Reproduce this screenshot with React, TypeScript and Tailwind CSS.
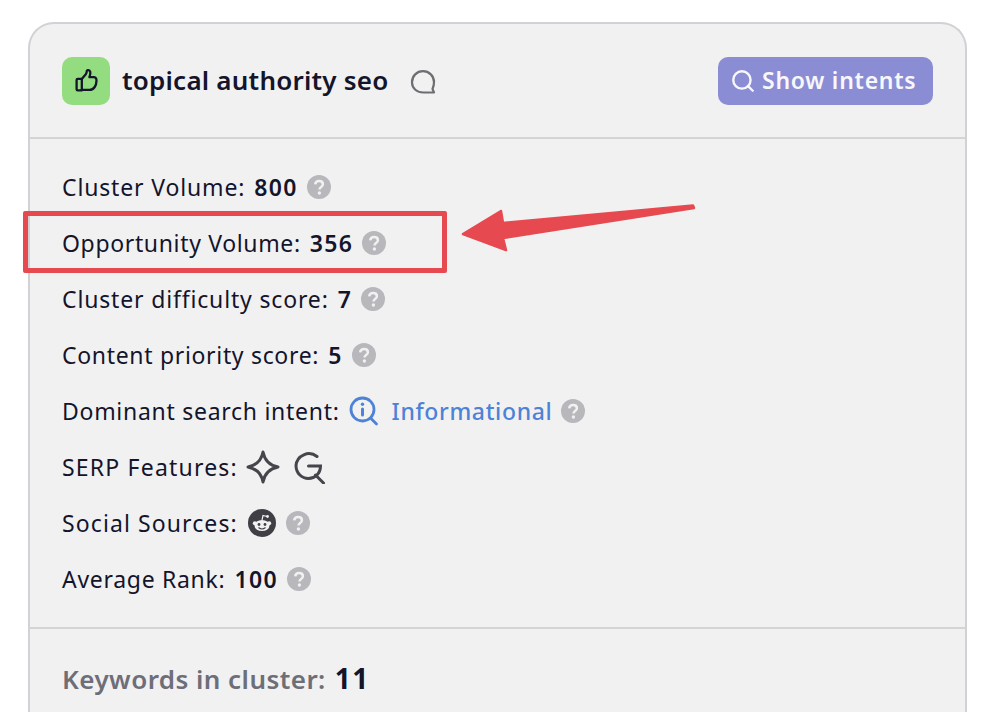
import { Search } from "lucide-react";
import type { ReactNode } from "react";

const FONT = "font-['Noto_Sans','Open_Sans',sans-serif]";

function Help() {
  return (
    <svg viewBox="0 0 24 24" className="h-6 w-6 flex-none">
      <circle cx="12" cy="12" r="12" fill="#b7b7bc" />
      <path
        d="M8.2 9.4c.2-2.2 1.8-3.4 3.9-3.4 2.2 0 3.8 1.3 3.8 3.2 0 1.4-.8 2.2-1.8 2.9-1 .7-1.6 1.2-1.6 2.5"
        fill="none"
        stroke="#f1f1f2"
        strokeWidth="2.5"
      />
      <circle cx="12.4" cy="18" r="1.7" fill="#f1f1f2" />
    </svg>
  );
}

type RowProps = {
  label: string;
  value?: string;
  children?: ReactNode;
  help?: boolean;
  track?: string;
};

function Row({ label, value, children, help = true, track = "tracking-[0.85px]" }: RowProps) {
  return (
    <div className="flex h-14 items-center text-[23px] text-[#14142b]">
      <span className={track}>{label}</span>
      {value && <b className="ml-[9px] font-semibold tracking-[1.4px]">{value}</b>}
      {children}
      {help && <span className="ml-[9px]"><Help /></span>}
    </div>
  );
}

function IntentIcon() {
  return (
    <svg viewBox="0 0 30 30" className="ml-[9px] h-[30px] w-[30px] flex-none" fill="none" stroke="#4d82d6" strokeWidth="2.8" strokeLinecap="round">
      <circle cx="13.5" cy="13.5" r="11.5" />
      <path d="M21.5 22l6 6" />
      <path d="M13.5 13v6" strokeWidth="3" />
      <circle cx="13.5" cy="8.3" r="1.7" fill="#4d82d6" stroke="none" />
    </svg>
  );
}

function SparkIcon() {
  return (
    <svg viewBox="0 0 34 34" className="ml-[8px] h-[34px] w-[34px] flex-none" fill="none" stroke="#45454b" strokeWidth="3" strokeLinejoin="round">
      <path d="M17 2c1.6 8.5 6 13.200 15 15-9 1.800-13.400 6.500-15 15-1.600-8.500-6-13.200-15-15 9-1.800 13.400-6.500 15-15z" />
    </svg>
  );
}

function GoogleSearchIcon() {
  return (
    <svg viewBox="0 0 34 34" className="ml-[13px] h-[34px] w-[34px] flex-none" fill="none" stroke="#45454b" strokeWidth="3" strokeLinecap="round">
      <path d="M24 6.500A13 13 0 0 0 3 15.500c0 7.500 5.500 13 12.500 13 6.500 0 12-5 12-12.500H15.500" />
      <path d="M22.500 25l8 8" />
    </svg>
  );
}

function RedditIcon() {
  return (
    <svg viewBox="0 0 28 28" className="ml-[10px] mr-[1px] h-7 w-7 flex-none">
      <circle cx="14" cy="14" r="14" fill="#3f3f45" />
      <ellipse cx="14" cy="16.500" rx="7.500" ry="5.500" fill="#f1f1f2" />
      <circle cx="6.800" cy="14.300" r="2" fill="#f1f1f2" />
      <circle cx="21.200" cy="14.300" r="2" fill="#f1f1f2" />
      <path d="M14 11l1-4.500 4 1" fill="none" stroke="#f1f1f2" strokeWidth="1.200" />
      <circle cx="19.500" cy="7.500" r="1.400" fill="#f1f1f2" />
      <circle cx="11" cy="15.500" r="1.400" fill="#3f3f45" />
      <circle cx="17" cy="15.500" r="1.400" fill="#3f3f45" />
      <path d="M10.800 18.800c1.800 1.400 4.600 1.400 6.400 0" fill="none" stroke="#3f3f45" strokeWidth="1.100" strokeLinecap="round" />
    </svg>
  );
}

export default function App() {
  return (
    <div className={`relative h-[712px] w-[1000px] overflow-hidden bg-white pl-[28px] pt-[22px] ${FONT}`}>
      <div className="h-[720px] w-[939px] rounded-t-[26px] border-2 border-b-0 border-[#d1d1d6] bg-[#f1f1f2]">
        <header className="flex h-[115px] items-center justify-between border-b-2 border-[#d4d4d8] px-[32px]">
          <div className="flex items-center">
            <div className="flex h-12 w-12 items-center justify-center rounded-[10px] bg-[#93dd80]">
              <svg viewBox="0 0 24 24" className="h-[25px] w-[25px]" fill="none" stroke="#14142b" strokeWidth="2.200" strokeLinejoin="round" strokeLinecap="round">
                <path d="M7.500 10.500v11H3.500a1 1 0 0 1-1-1v-9a1 1 0 0 1 1-1h4z" />
                <path d="M7.500 10.500l3.800-4.500c.7-.9 1-1.800 1-3.300 0-1 2.700-1 3.300 1 .5 1.700-.3 3.700-.8 5h4c1.800 0 2.900 1.400 2.800 3.400-.1 4.500-2.300 8.900-6.600 8.900H7.500" />
              </svg>
            </div>
            <h1 className="-mt-[2px] ml-3 text-[26px] font-semibold leading-none tracking-[0.22px] text-[#14142b]">topical authority seo</h1>
            <svg viewBox="0 0 26 26" className="ml-[21px] mt-[2px] h-[26px] w-[26px]" fill="none" stroke="#6d6d72" strokeWidth="2.200" strokeLinejoin="round">
              <path d="M24 23.500h-10.500C7 23.500 2 19.500 2 13.200 2 7 6.800 2.200 13 2.200S24 7 24 13c0 3-.8 5.500-1.500 7l1.500 3.500z" />
            </svg>
          </div>
          <button className="flex h-12 w-[215px] items-center gap-[6px] rounded-[10px] bg-[#8a8dd3] pl-[12px] text-[23px] font-semibold tracking-[0.75px] text-[#f7f7fc]">
            <Search size={26} strokeWidth={2.2} />
            Show intents
          </button>
        </header>

        <div className="border-b-2 border-[#d4d4d8] py-[20px] pl-[32px]">
          <Row label="Cluster Volume:" value="800" />
          <Row label="Opportunity Volume:" value="356" track="tracking-[0.65px]" />
          <Row label="Cluster difficulty score:" value="7" track="tracking-[0.84px]" />
          <Row label="Content priority score:" value="5" track="tracking-[0.68px]" />
          <Row label="Dominant search intent:" track="tracking-[0.72px]">
            <IntentIcon />
            <span className="ml-[13px] font-medium tracking-[0.65px] text-[#4d82d6]">Informational</span>
          </Row>
          <Row label="SERP Features:" help={false} track="tracking-[1.2px]">
            <SparkIcon />
            <GoogleSearchIcon />
          </Row>
          <Row label="Social Sources:" track="tracking-[1.1px]">
            <RedditIcon />
          </Row>
          <Row label="Average Rank:" value="100" track="tracking-[0.7px]" />
        </div>

        <div className="flex items-baseline pl-[32px] pt-[30px] text-[26px] font-semibold leading-[38px] tracking-[0.45px] text-[#6e6e78]">
          <span>Keywords in cluster:</span>
          <span className="ml-[9px] text-[28px] font-bold tracking-[1.5px] text-[#14142b]">11</span>
        </div>
      </div>

      {/* red annotation drawn over the card */}
      <div className="absolute left-[23px] top-[211px] h-[62px] w-[424px] rounded-[2px] border-[5px] border-[#e6494f]" />
      <svg viewBox="0 0 1000 712" className="pointer-events-none absolute left-0 top-0 h-[712px] w-[1000px]">
        <path
          d="M693 205.500 L503 223 L501 211 L463 234 L506 250 L503 238 L694 208 Z"
          fill="#e6494f"
          stroke="#e6494f"
          strokeWidth="2.500"
          strokeLinejoin="round"
        />
      </svg>
    </div>
  );
}
